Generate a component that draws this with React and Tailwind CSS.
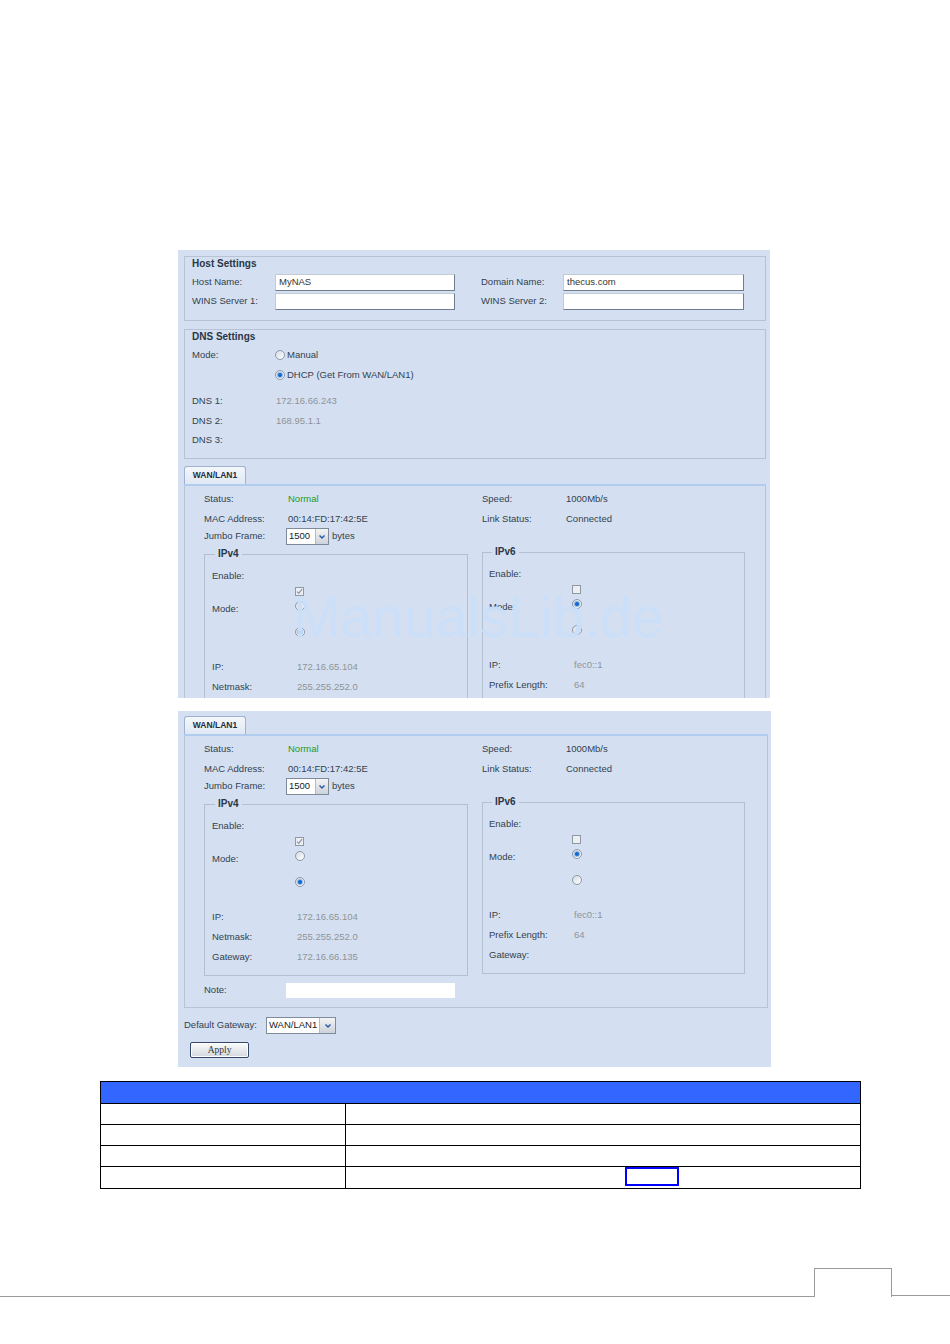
import React from "react";

const Chevron = () => (
  <svg width="8" height="6" viewBox="0 0 8 6">
    <path d="M1.5 1.5 L4 4 L6.5 1.5" fill="none" stroke="#2b5aa8" strokeWidth="1.5" />
  </svg>
);

const Radio = ({ checked }) => (
  <span className="flex w-[10px] h-[10px] shrink-0 items-center justify-center rounded-full border border-[#8d98a6] bg-linear-to-br from-[#d6dce3] to-white">
    {checked ? <span className="w-[4px] h-[4px] rounded-full bg-[#1467c8] shadow-[0_0_0_1px_#8bb9ec]" /> : null}
  </span>
);

const Check = ({ checked }) => (
  <span className="flex w-[9px] h-[9px] items-center justify-center border border-[#8f99a5] bg-[#eceef1]">
    {checked ? (
      <svg width="7" height="7" viewBox="0 0 7 7">
        <path d="M1 3.6 L2.8 5.4 L6 1.2" fill="none" stroke="#8596ad" strokeWidth="1.2" />
      </svg>
    ) : null}
  </span>
);

const TextBox = ({ value, className }) => (
  <div className={`h-[17px] bg-white border border-[#c3cad2] border-r-[#6e7e8f] border-b-[#6e7e8f] pl-[3px] flex items-center text-[#333] ${className}`}>
    {value}
  </div>
);

const Select = ({ value, boxClass, arrowClass }) => (
  <div className="flex h-[17px] border border-[#7d8b9b] bg-white">
    <div className={`pl-[2px] flex items-center text-[#222] ${boxClass}`}>{value}</div>
    <div className={`border-l border-[#b3bac3] bg-linear-to-b from-[#f4f4f4] to-[#cdd3da] flex items-center justify-center ${arrowClass}`}>
      <Chevron />
    </div>
  </div>
);

const Line = ({ label, value, labelClass, valueClass = "", className = "" }) => (
  <div className={`flex h-[12px] items-center ${className}`}>
    <span className={`shrink-0 ${labelClass}`}>{label}</span>
    <span className={valueClass}>{value}</span>
  </div>
);

const gray = "text-[#8f9398]";

const IpBox = ({ title, boxClass, legendClass, padClass, firstChecked, rows }) => (
  <div className={`border border-[#b3c0d2] h-[172px] ${boxClass}`}>
    <div className={`-mt-[7px] w-fit px-[3px] bg-[#d4e0f1] font-bold text-[10px] leading-[12px] text-[#2a3646] ${legendClass}`}>
      {title}
    </div>
    <div className={padClass}>
      <div className="mt-[10px] h-[12px] flex items-center">Enable:</div>
      <div className="flex">
        <div className="w-[83px] shrink-0">
          <div className="mt-[21px] h-[12px] flex items-center">Mode:</div>
        </div>
        <div className="flex flex-col">
          <div className="mt-[5px]">
            <Check checked={title === "IPv4"} />
          </div>
          <div className="mt-[5px]">
            <Radio checked={firstChecked} />
          </div>
          <div className="mt-[16px]">
            <Radio checked={!firstChecked} />
          </div>
        </div>
      </div>
      {rows.map((r, i) => (
        <Line
          key={r[0]}
          label={r[0]}
          value={r[1]}
          labelClass="w-[85px]"
          valueClass={gray}
          className={i === 0 ? "mt-[24px]" : "mt-[8px]"}
        />
      ))}
    </div>
  </div>
);

// cropped: the first screenshot is cut off under the Netmask row
const WanSection = ({ cropped }) => {
  const v4 = [
    ["IP:", "172.16.65.104"],
    ["Netmask:", "255.255.252.0"],
    ["Gateway:", "172.16.66.135"],
  ];
  const v6 = [
    ["IP:", "fec0::1"],
    ["Prefix Length:", "64"],
    ["Gateway:", ""],
  ];
  return (
    <div>
      <div className="flex h-[18px]">
        <div className="w-[62px] h-[18px] rounded-t-[3px] border border-b-0 border-[#9fb3d1] bg-linear-to-b from-[#f4f7fb] to-[#dfe8f4] flex items-center justify-center font-bold text-[8.5px] text-[#1f2d3d]">
          WAN/LAN1
        </div>
      </div>
      <div className="h-[2px] bg-[#b2ccef]" />
      <div className="border-x border-b border-[#b6c4d7] pl-[19px] pb-[9px]">
        <div className="flex">
          <div className="w-[278px]">
            <Line label="Status:" value="Normal" labelClass="w-[84px]" valueClass="text-[#1d9b1d]" className="mt-[7px]" />
            <Line label="MAC Address:" value="00:14:FD:17:42:5E" labelClass="w-[84px]" className="mt-[8px]" />
            <div className="mt-[3px] flex h-[17px] items-center">
              <span className="w-[82px] shrink-0">Jumbo Frame:</span>
              <Select value="1500" boxClass="w-[28px]" arrowClass="w-[13px]" />
              <span className="ml-[3px]">bytes</span>
            </div>
          </div>
          <div>
            <Line label="Speed:" value="1000Mb/s" labelClass="w-[84px]" className="mt-[7px]" />
            <Line label="Link Status:" value="Connected" labelClass="w-[84px]" className="mt-[8px]" />
          </div>
        </div>
        <div className="mt-[7px] flex items-start">
          <IpBox
            title="IPv4"
            boxClass="mt-[2px] w-[264px]"
            legendClass="ml-[10px]"
            padClass="pl-[7px]"
            firstChecked={false}
            rows={cropped ? v4.slice(0, 2) : v4}
          />
          <IpBox
            title="IPv6"
            boxClass="ml-[14px] w-[263px]"
            legendClass="ml-[9px]"
            padClass="pl-[6px]"
            firstChecked={true}
            rows={cropped ? v6.slice(0, 2) : v6}
          />
        </div>
        {cropped ? null : (
          <div className="mt-[7px] flex h-[15px] items-center">
            <span className="w-[82px] shrink-0">Note:</span>
            <div className="w-[169px] h-[15px] bg-white" />
          </div>
        )}
      </div>
    </div>
  );
};

const App = () => {
  return (
    <div className="relative w-[950px] h-[1344px] bg-white pt-[250px] font-['Liberation_Sans',Arial,sans-serif] text-[9.5px] text-[#33404f] overflow-hidden">
      {/* first screenshot, cut at the bottom */}
      <div className="ml-[178px] w-[592px] h-[448px] overflow-hidden bg-[#d4e0f1] pt-[6px] pl-[6px] pr-[4px]">
        <div className="h-[65px] border border-[#b6c3d5] pl-[7px]">
          <div className="h-[12px] flex items-center font-bold text-[10px] text-[#2a3646]">Host Settings</div>
          <div className="mt-[5px] flex items-center">
            <span className="w-[83px] shrink-0">Host Name:</span>
            <TextBox value="MyNAS" className="w-[180px]" />
            <span className="ml-[26px] w-[82px] shrink-0">Domain Name:</span>
            <TextBox value="thecus.com" className="w-[181px]" />
          </div>
          <div className="mt-[2px] flex items-center">
            <span className="w-[83px] shrink-0">WINS Server 1:</span>
            <TextBox value="" className="w-[180px]" />
            <span className="ml-[26px] w-[82px] shrink-0">WINS Server 2:</span>
            <TextBox value="" className="w-[181px]" />
          </div>
        </div>

        <div className="mt-[8px] h-[130px] border border-[#b6c3d5] pl-[7px]">
          <div className="h-[12px] flex items-center font-bold text-[10px] text-[#2a3646]">DNS Settings</div>
          <div className="mt-[7px] flex h-[12px] items-center">
            <span className="w-[83px] shrink-0">Mode:</span>
            <Radio checked={false} />
            <span className="ml-[2px]">Manual</span>
          </div>
          <div className="mt-[8px] flex h-[12px] items-center">
            <span className="w-[83px] shrink-0" />
            <Radio checked={true} />
            <span className="ml-[2px]">DHCP (Get From WAN/LAN1)</span>
          </div>
          <Line label="DNS 1:" value="172.16.66.243" labelClass="w-[84px]" valueClass={gray} className="mt-[14px]" />
          <Line label="DNS 2:" value="168.95.1.1" labelClass="w-[84px]" valueClass={gray} className="mt-[8px]" />
          <Line label="DNS 3:" value="" labelClass="w-[84px]" className="mt-[7px]" />
        </div>

        <div className="mt-[7px]">
          <WanSection cropped />
        </div>
      </div>

      {/* second screenshot */}
      <div className="mt-[13px] ml-[178px] w-[593px] bg-[#d4e0f1] pt-[5px] pl-[6px] pr-[3px] pb-[9px]">
        <WanSection />
        <div className="mt-[9px] flex h-[17px] items-center">
          <span className="w-[82px] shrink-0">Default Gateway:</span>
          <Select value="WAN/LAN1" boxClass="w-[52px]" arrowClass="w-[16px]" />
        </div>
        <button className="mt-[8px] ml-[6px] w-[59px] h-[16px] rounded-[2px] border border-[#34476b] bg-linear-to-b from-[#fbfbfb] to-[#d4d8de] shadow-[inset_0_0_0_1px_#ffffff] flex items-center justify-center font-['Liberation_Serif',serif] text-[9.5px] text-[#333]">
          Apply
        </button>
      </div>

      {/* description table */}
      <div className="mt-[14px] ml-[100px] w-[761px] border border-black">
        <div className="h-[22px] bg-[#3366ff] border-b border-black" />
        {[0, 1, 2, 3].map((i) => (
          <div key={i} className={i < 3 ? "flex h-[21px] border-b border-black" : "flex h-[21px]"}>
            <div className="w-[245px] border-r border-black" />
            <div className="flex-1">
              {i === 3 ? <div className="ml-[279px] w-[54px] h-[19px] border-2 border-[#0000ff]" /> : null}
            </div>
          </div>
        ))}
      </div>

      {/* page footer */}
      <div className="mt-[79px] flex h-[29px] items-end">
        <div className="w-[814px] border-b border-[#9a9a9a]" />
        <div className="w-[78px] h-[29px] border border-b-0 border-[#9a9a9a]" />
        <div className="flex-1 mb-[1px] border-b border-[#9a9a9a]" />
      </div>

      {/* watermark over the first screenshot */}
      <div className="pointer-events-none absolute left-[293px] top-[589px] text-[57px] leading-none text-[#cbdffa] opacity-95">
        ManualsLib.de
      </div>
    </div>
  );
};

export default App;
